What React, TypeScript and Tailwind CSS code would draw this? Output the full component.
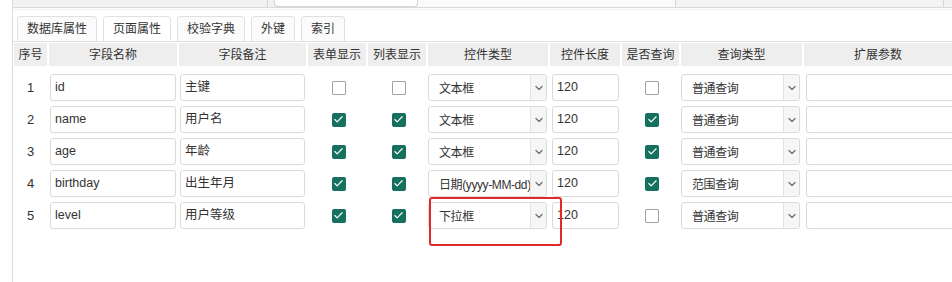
import { ChevronDown, Check } from "lucide-react";

type Row = {
  no: number;
  name: string;
  remark: string;
  form: boolean;
  list: boolean;
  control: string;
  length: string;
  query: boolean;
  queryType: string;
};

const rows: Row[] = [
  { no: 1, name: "id", remark: "主键", form: false, list: false, control: "文本框", length: "120", query: false, queryType: "普通查询" },
  { no: 2, name: "name", remark: "用户名", form: true, list: true, control: "文本框", length: "120", query: true, queryType: "普通查询" },
  { no: 3, name: "age", remark: "年龄", form: true, list: true, control: "文本框", length: "120", query: true, queryType: "普通查询" },
  { no: 4, name: "birthday", remark: "出生年月", form: true, list: true, control: "日期(yyyy-MM-dd)", length: "120", query: true, queryType: "范围查询" },
  { no: 5, name: "level", remark: "用户等级", form: true, list: true, control: "下拉框", length: "120", query: false, queryType: "普通查询" },
];

const headers = ["序号", "字段名称", "字段备注", "表单显示", "列表显示", "控件类型", "控件长度", "是否查询", "查询类型", "扩展参数"];
const tabs = ["数据库属性", "页面属性", "校验字典", "外键", "索引"];

const grid = "grid grid-cols-[33px_128px_127px_58px_58px_120px_70px_57px_121px_1fr] gap-x-[2px]";

function TextBox({ value }: { value: string }) {
  return (
    <div className="flex h-[27px] items-center overflow-hidden whitespace-nowrap rounded-[3px] border border-[#dadada] bg-white pl-[4px] text-[12.5px] text-[#333]">
      {value}
    </div>
  );
}

function CheckBox({ checked }: { checked: boolean }) {
  return (
    <div className="flex items-center justify-center">
      {checked ? (
        <span className="flex h-[14px] w-[14px] items-center justify-center rounded-[2px] bg-[#16705f]">
          <Check size={11} strokeWidth={2.5} className="text-white" />
        </span>
      ) : (
        <span className="h-[14px] w-[14px] rounded-[1px] border border-[#a3a3a3] bg-white" />
      )}
    </div>
  );
}

function SelectBox({ value }: { value: string }) {
  return (
    <div className="flex h-[27px] items-stretch overflow-hidden rounded-[3px] border border-[#dadada] bg-white text-[12px] text-[#333]">
      <div className="flex min-w-0 flex-1 items-center overflow-hidden whitespace-nowrap pl-[10px] pt-[2px] tracking-[-0.4px]">
        {value}
      </div>
      <div className="flex w-[16px] shrink-0 items-center justify-center border-l border-[#e2e2e2] bg-[#f6f6f6]">
        <ChevronDown size={12} strokeWidth={2.5} className="text-[#707070]" />
      </div>
    </div>
  );
}

export default function App() {
  return (
    <div
      className="relative flex h-[282px] w-[952px] overflow-hidden bg-white text-[#333]"
      style={{ fontFamily: '"Liberation Sans", "Noto Sans CJK SC", sans-serif' }}
    >
      {/* Left gutter */}
      <div className="w-[13px] shrink-0 border-r border-[#dcdcdc] bg-white" />

      <div className="flex flex-1 flex-col">
        {/* Top strip from the panel above */}
        <div className="flex h-[8px] border-b border-[#d9d9d9] bg-[#f1f1f1]">
          <div className="w-[255px] border-r border-[#d4d4d4]" />
          <div className="ml-[6px] w-[144px] rounded-b-[4px] border-x border-b border-[#d4d4d4] bg-white" />
          <div className="w-[258px] border-r border-[#d4d4d4] bg-[#fafafa]" />
          <div className="w-[268px] border-r border-[#d4d4d4] bg-[#f3f3f3]" />
        </div>
        <div className="h-[2px] border-b border-[#f0f0f0]" />

        {/* Tabs */}
        <div className="flex h-[32px] items-end gap-[6px] border-b border-[#e0e0e0] pl-[4px]">
          {tabs.map((t, i) => (
            <div
              key={t}
              className={
                "flex h-[25px] items-center rounded-t-[4px] border border-b-0 border-[#e0e0e0] px-[9px] text-[12px] text-[#333] " +
                (i === 1 ? "bg-white" : "bg-[#fbfbfb]")
              }
            >
              {t}
            </div>
          ))}
        </div>

        {/* Table */}
        <div className="pl-[1px] pt-[1px]">
          <div className={grid}>
            {headers.map((h) => (
              <div key={h} className="flex h-[23px] items-center justify-center bg-[#eeeeee] text-[12px] text-[#333]">
                {h}
              </div>
            ))}
          </div>

          <div className="pt-[6px]">
            {rows.map((r) => (
              <div key={r.no} className={grid + " h-[32px] items-start pt-[2px]"}>
                <div className="flex h-[27px] items-center justify-center text-[13px]">{r.no}</div>
                <div className="pl-[1px] pr-[1px]">
                  <TextBox value={r.name} />
                </div>
                <div className="pl-[1px] pr-[1px]">
                  <TextBox value={r.remark} />
                </div>
                <div className="flex h-[27px] items-center justify-center pl-[3px]">
                  <CheckBox checked={r.form} />
                </div>
                <div className="flex h-[27px] items-center justify-center pl-[3px]">
                  <CheckBox checked={r.list} />
                </div>
                <div className="pr-[1px]">
                  <SelectBox value={r.control} />
                </div>
                <div className="pl-[2px] pr-[1px]">
                  <TextBox value={r.length} />
                </div>
                <div className="flex h-[27px] items-center justify-center pl-[3px]">
                  <CheckBox checked={r.query} />
                </div>
                <div className="pr-[2px]">
                  <SelectBox value={r.queryType} />
                </div>
                <div className="pl-[2px]">
                  <div className="h-[27px] rounded-l-[3px] border-y border-l border-[#dadada] bg-white" />
                </div>
              </div>
            ))}
          </div>
        </div>
      </div>

      {/* Red highlight around the last control type */}
      <div className="absolute left-[429px] top-[197px] h-[49px] w-[133px] rounded-[3px] border-2 border-[#e02a2a]" />
    </div>
  );
}
